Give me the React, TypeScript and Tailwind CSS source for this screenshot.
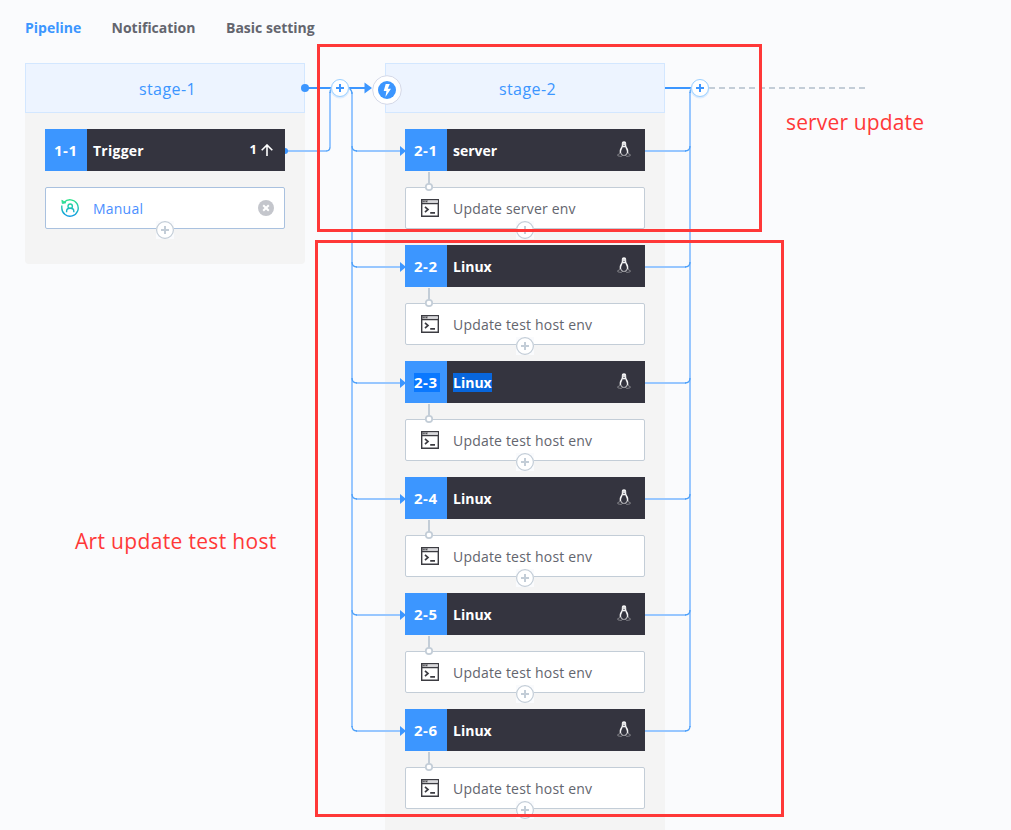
import React from "react";

const jobs = [
  { id: "2-1", name: "server", task: "Update server env" },
  { id: "2-2", name: "Linux", task: "Update test host env" },
  { id: "2-3", name: "Linux", task: "Update test host env", selected: true },
  { id: "2-4", name: "Linux", task: "Update test host env" },
  { id: "2-5", name: "Linux", task: "Update test host env" },
  { id: "2-6", name: "Linux", task: "Update test host env" },
];

function Tux() {
  return (
    <svg className="mr-[14px] -mt-[3px] h-4 w-[14px]" viewBox="0 0 14 16" fill="none">
      <path d="M7 .3C5.2.3 4.7 1.6 4.8 3.2c.1 1.700-.5 2.700-1.300 4.100C2.700 8.700 2.400 10.200 2.900 11.600L4.600 14.600h4.800l1.700-3c.5-1.400.2-2.900-.6-4.300C9.700 5.900 9.100 4.900 9.200 3.200 9.300 1.600 8.800.3 7 .3Z" fill="#f4f4f5" />
      <path d="M5.800 5.900 7 6.500l1.200-.6c.5 1.800 1.800 3.300 1.700 5.100-.1 1.800-1.200 3-2.900 3s-2.900-1.200-2.900-3c-.1-1.800 1.200-3.300 1.700-5.100Z" fill="#34343f" />
      <path d="M5.800 3h.7M7.600 3h.7M6 4.500h2" stroke="#62626b" strokeWidth=".7" />
      <path d="m2.500 11.600-.2 1.500-1.700.6.3 1.200 3.500.6.7-1.100-2.300-2.800ZM11.500 11.600l.2 1.500 1.700.6-.3 1.200-3.500.6-.7-1.100 2.300-2.800Z" fill="#34343f" stroke="#a0a0a6" strokeWidth=".65" />
    </svg>
  );
}

function TerminalIcon() {
  return (
    <svg className="ml-[15px] h-[18px] w-[18px] shrink-0" viewBox="0 0 18 18" fill="none" stroke="#3c3c42">
      <path d="M.7.7h16.6v16.6H.7zM.7 4.500h16.6" strokeWidth="1.400" />
      <path d="M1.500 2.500h5.600" strokeWidth="1.600" strokeDasharray="1.300 .5" />
      <path d="M7 2.500h10" strokeWidth="2.200" stroke="#d9d9dc" />
      <path d="m4 7.800 3 2.700-3 2.700M9.200 13.800H14" strokeWidth="1.700" />
    </svg>
  );
}

function ManualIcon() {
  return (
    <svg className="ml-[15px] h-[18px] w-[18px] shrink-0" viewBox="0 0 18 18" fill="none" stroke="url(#manual)" strokeWidth="1.400">
      <defs>
        <linearGradient id="manual" gradientUnits="userSpaceOnUse" x1="0" y1="0" x2="0" y2="18">
          <stop stopColor="#2ee688" />
          <stop offset="1" stopColor="#109ae8" />
        </linearGradient>
      </defs>
      <path d="M3 3.400A8.200 8.200 0 1 1 .8 9V6.600" />
      <path d="M.8 1.200 1.300 4.600 5 3.800z" fill="#2ee68a" strokeWidth=".8" />
      <circle cx="9.200" cy="7.200" r="2.200" />
      <path d="M5.600 13.200V12c0-1.600 1.500-2.700 3.600-2.700S12.800 10.400 12.800 12v1.200" />
    </svg>
  );
}

function AddBelow() {
  return (
    <span className="absolute -bottom-[11px] left-[110px] h-[18px] w-[18px] bg-[#fafbfd]">
      <svg className="h-[18px] w-[18px]" viewBox="0 0 18 18" fill="none" stroke="#c3cdd7">
        <circle cx="9" cy="9" r="8.400" fill="white" strokeWidth="1.200" />
        <path d="M5 9h8M9 5v8" strokeWidth="2" />
      </svg>
    </span>
  );
}

function Stage({ title, last, children }: { title: string; last?: boolean; children: React.ReactNode }) {
  return (
    <section className={last ? "h-[800px] w-[280px] bg-[#f4f4f4]" : "h-[201px] w-[280px] rounded-b-sm bg-[#f4f4f4]"}>
      <h2 className="flex h-[50px] items-center justify-center border border-[#d3e7ff] bg-[#edf4ff] pl-[5px] pt-px text-[16px] tracking-[0.42px] text-[#3c96ff]">
        {title}
      </h2>
      <div className="flex flex-col gap-4 px-5 pt-4">{children}</div>
    </section>
  );
}

function Header({ id, name, selected, children }: { id: string; name: string; selected?: boolean; children: React.ReactNode }) {
  return (
    <div className="flex h-[42px] items-center bg-[#34343f] text-[14px] font-bold text-white">
      <div className="flex h-full w-[42px] items-center bg-[#3c96ff] pl-[9px] text-[15px] tracking-[0.5px]">
        <span className={selected ? "bg-[#0a78ff] pr-[3px] leading-[19px]" : ""}>{id}</span>
      </div>
      <span className={selected ? "ml-1.5 bg-[#0866dc] leading-[19px]" : name === "Trigger" ? "ml-1.5 tracking-[0.25px]" : "ml-1.5"}>{name}</span>
      <div className="ml-auto flex items-center">{children}</div>
    </div>
  );
}

function Connectors() {
  const ys = jobs.map((_, i) => 151 + i * 116);
  return (
    <svg className="pointer-events-none absolute left-0 top-0 h-[830px] w-[1011px]" viewBox="0 0 1011 830" fill="none">
      <g stroke="#98c7ff" strokeWidth="2">
        <path d="M285 151h41M330 147V92M352 92V727M690 92V727" />
        {ys.map((y) => (
          <path key={y} d={`M356 ${y}h45M645 ${y}h41`} />
        ))}
      </g>
      <g stroke="#4b9ff9" strokeWidth="1.300">
        <path d="M326 151q4 0 4-4M346 88q6 0 6 6M694 88q-4 0-4 5M334 88q-4 0-4 5" />
        {ys.map((y) => (
          <path key={y} d={`M352 ${y - 5}q0 5 5 5M690 ${y - 5}q0 5-5 5`} />
        ))}
      </g>
      <path d="M305 88h26M348 88h18M665 88h26" stroke="#3c96ff" strokeWidth="2" />
      <path d="M709 88h156" stroke="#c3cdd7" strokeWidth="2" strokeDasharray="6 4" />
      <g fill="#3c96ff">
        <circle cx="305" cy="88" r="4" />
        <path d="M285 148a3 3 0 0 1 0 6zM364.500 82.500 372 88l-7.500 5.500z" />
        {ys.map((y) => (
          <path key={y} d={`M400 ${y - 5}l6 5-6 5z`} />
        ))}
      </g>
      {[340, 700].map((x) => (
        <g key={x}>
          <circle cx={x} cy="89" r="9.500" fill="#dcecff" />
          <circle cx={x} cy="88" r="8.500" fill="white" stroke="#9bd0ff" />
          <path d={`M${x - 4} 88h8M${x} 84v8`} stroke="#3c96ff" strokeWidth="2" />
        </g>
      ))}
      <circle cx="387" cy="90" r="14.300" fill="white" stroke="#d5d9e8" />
      <circle cx="387" cy="90" r="9" fill="#3c96ff" />
      <path d="m385.700 84-2 7h2.700l-1 6 5.600-8.300h-3.200l2-4.700z" fill="white" />
      {ys.map((y) => (
        <g key={y} stroke="#c3cdd7" strokeWidth="2">
          <path d={`M429 ${y + 21}v12`} />
          <circle cx="429" cy={y + 36} r="3.200" fill="white" strokeWidth="1.700" />
        </g>
      ))}
    </svg>
  );
}

export default function App() {
  return (
    <main className="relative h-[830px] w-[1011px] overflow-hidden bg-[#fafbfd] font-['Open_Sans','Noto_Sans',sans-serif] text-[14px] text-[#63656e]">
      <nav className="flex h-[63px] gap-[30px] pl-[25px] pt-[18px] text-[14px] font-bold leading-[20px]">
        <span className="w-[56.500px] whitespace-nowrap text-[#3c96ff]">Pipeline</span>
        <span className="w-[84.500px] whitespace-nowrap">Notification</span>
        <span className="whitespace-nowrap">Basic setting</span>
      </nav>
      <div className="flex gap-20 pl-[25px]">
        <Stage title="stage-1">
          <Header id="1-1" name="Trigger">
            <span className="mr-1 text-[13px]">1</span>
            <svg className="mr-3 h-3 w-3" viewBox="0 0 12 12" fill="none" stroke="white" strokeWidth="1.600">
              <path d="M6 12V1M.7 6.300 6 1l5.300 5.300" />
            </svg>
          </Header>
          <div className="relative flex h-[42px] items-center rounded-[2px] border border-[#a9c1df] bg-white">
            <ManualIcon />
            <span className="ml-[14px] tracking-[0.22px] text-[#4b8fff]">Manual</span>
            <svg className="ml-auto mr-[10px] h-4 w-4" viewBox="0 0 16 16">
              <circle cx="8" cy="8" r="8" fill="#c4c6cc" />
              <path d="m5.200 5.200 5.600 5.600m0-5.600-5.600 5.600" stroke="white" strokeWidth="2" />
            </svg>
            <AddBelow />
          </div>
        </Stage>
        <Stage title="stage-2" last>
          {jobs.map((job) => (
            <React.Fragment key={job.id}>
              <Header id={job.id} name={job.name} selected={job.selected}>
                <Tux />
              </Header>
              <div className="relative flex h-[42px] items-center rounded-[2px] border border-[#c3cdd7] bg-white">
                <TerminalIcon />
                <span className="ml-[14px] tracking-[0.19px]">{job.task}</span>
                <AddBelow />
              </div>
            </React.Fragment>
          ))}
        </Stage>
      </div>
      <Connectors />
      <div className="absolute left-[317px] top-[44px] h-[188px] w-[445px] border-[3px] border-[#ff3838]" />
      <div className="absolute left-[315px] top-[240px] h-[577px] w-[469px] border-[3px] border-[#ff3838]" />
      <span className="absolute left-[786px] top-[107px] whitespace-nowrap text-[21px] leading-[30px] tracking-[0.15px] text-[#ff3838]">server update</span>
      <span className="absolute left-[75px] top-[526px] whitespace-nowrap text-[21px] leading-[30px] tracking-[0.33px] text-[#ff3838]">Art update test host</span>
    </main>
  );
}
